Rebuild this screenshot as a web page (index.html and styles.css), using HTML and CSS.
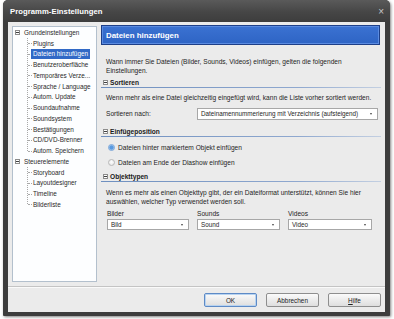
FILE: index.html
```html
<!DOCTYPE html>
<html lang="de">
<head>
<meta charset="utf-8">
<title>Programm-Einstellungen</title>
<link rel="stylesheet" href="styles.css">
</head>
<body>
<div class="window">
  <div class="titlebar">
    <span class="title">Programm-Einstellungen</span>
    <span class="close">×</span>
  </div>
  <div class="client">
    <div class="main">
      <div class="tree">
        <div class="root"><span class="tog"></span><span class="rtext">Grundeinstellungen</span></div>
        <div class="children">
          <div class="leaf"><span>Plugins</span></div>
          <div class="leaf sel"><span>Dateien hinzufügen</span></div>
          <div class="leaf"><span>Benutzeroberfläche</span></div>
          <div class="leaf"><span>Temporäres Verze...</span></div>
          <div class="leaf"><span>Sprache / Language</span></div>
          <div class="leaf"><span>Autom. Update</span></div>
          <div class="leaf"><span>Soundaufnahme</span></div>
          <div class="leaf"><span>Soundsystem</span></div>
          <div class="leaf"><span>Bestätigungen</span></div>
          <div class="leaf"><span>CD/DVD-Brenner</span></div>
          <div class="leaf"><span>Autom. Speichern</span></div>
        </div>
        <div class="root"><span class="tog"></span><span class="rtext">Steuerelemente</span></div>
        <div class="children">
          <div class="leaf"><span>Storyboard</span></div>
          <div class="leaf"><span>Layoutdesigner</span></div>
          <div class="leaf"><span>Timeline</span></div>
          <div class="leaf"><span>Bilderliste</span></div>
        </div>
      </div>
      <div class="panel">
        <div class="banner">Dateien hinzufügen</div>
        <p class="intro">Wann immer Sie Dateien (Bilder, Sounds, Videos) einfügen, gelten die folgenden Einstellungen.</p>

        <div class="sec-head"><span class="tog"></span>Sortieren</div>
        <p class="txt t1">Wenn mehr als eine Datei gleichzeitig eingefügt wird, kann die Liste vorher sortiert werden.</p>
        <div class="sort-row">
          <span class="sort-label">Sortieren nach:</span>
          <div class="combo wide"><span>Dateinamennummerierung mit Verzeichnis (aufsteigend)</span><span class="arrow"></span></div>
        </div>

        <div class="sec-head s2"><span class="tog"></span>Einfügeposition</div>
        <div class="radio r1"><span class="dot on"></span>Dateien hinter markiertem Objekt einfügen</div>
        <div class="radio r2"><span class="dot"></span>Dateien am Ende der Diashow einfügen</div>

        <div class="sec-head s3"><span class="tog"></span>Objekttypen</div>
        <p class="txt t3">Wenn es mehr als einen Objekttyp gibt, der ein Dateiformat unterstützt, können Sie hier auswählen, welcher Typ verwendet werden soll.</p>
        <div class="types">
          <div class="type"><span class="tlabel">Bilder</span><div class="combo"><span>Bild</span><span class="arrow"></span></div></div>
          <div class="type"><span class="tlabel">Sounds</span><div class="combo"><span>Sound</span><span class="arrow"></span></div></div>
          <div class="type"><span class="tlabel">Videos</span><div class="combo"><span>Video</span><span class="arrow"></span></div></div>
        </div>
      </div>
    </div>
    <div class="sep"></div>
    <div class="footer">
      <button class="btn default">OK</button>
      <button class="btn">Abbrechen</button>
      <button class="btn"><u>H</u>ilfe</button>
    </div>
  </div>
</div>
</body>
</html>
```
FILE: styles.css
```css
html, body {
  margin: 0;
  padding: 0;
}
body {
  background: #ffffff;
  font-family: "Liberation Sans", Arial, sans-serif;
  font-size: 6.6px;
  color: #1e1e1e;
  width: 394px;
  height: 319px;
  overflow: hidden;
}
.window {
  margin-left: 3px;
  width: 387px;
  height: 316px;
  box-sizing: border-box;
  background: #3d3d3d;
  padding: 0 5px 4px 5px;
  border-radius: 5px 5px 1px 1px;
  box-shadow: 1px 1px 3px rgba(0, 0, 0, 0.5);
  display: flex;
  flex-direction: column;
}
.titlebar {
  height: 22px;
  flex: none;
  display: flex;
  align-items: center;
  justify-content: space-between;
  background: linear-gradient(#5a5a5a, #464646 55%, #3d3d3d);
  margin: 0 -5px;
  padding: 1px 5px 0 7px;
  border-radius: 5px 5px 0 0;
  box-sizing: border-box;
}
.title {
  color: #ffffff;
  font-size: 7.7px;
  font-weight: bold;
  letter-spacing: 0.05px;
}
.close {
  color: #c8c8c8;
  font-size: 10px;
  line-height: 10px;
  margin-right: 1px;
}
.client {
  flex: 1;
  background: #ebebeb;
  display: flex;
  flex-direction: column;
}
.main {
  display: flex;
  padding: 3px 4px 0 4px;
  height: 260px;
  box-sizing: border-box;
}
.tree {
  margin-top: 1px;
  width: 85px;
  height: 256px;
  box-sizing: border-box;
  background: #fdfeff;
  border: 1px solid #b3c0cd;
  flex: none;
  color: #2a2a2a;
  font-size: 6.4px;
}
.root {
  display: flex;
  align-items: center;
  height: 10.75px;
  padding-left: 2px;
}
.root:first-child {
  margin-top: 0.6px;
}
.tog {
  display: inline-block;
  width: 5px;
  height: 5px;
  box-sizing: border-box;
  border: 1px solid #8c8c8c;
  background: linear-gradient(#404040, #404040) center / 3px 1px no-repeat, #ffffff;
  flex: none;
}
.rtext {
  margin-left: 4px;
}
.children {
  margin-left: 14px;
  background-image: repeating-linear-gradient(to bottom, #a8a8a8 0 1px, transparent 1px 2px);
  background-size: 1px calc(100% - 5px);
  background-repeat: no-repeat;
}
.leaf {
  display: flex;
  align-items: center;
  height: 10.75px;
}
.leaf::before {
  content: "";
  width: 4px;
  height: 0;
  border-top: 1px dotted #a8a8a8;
  margin-left: 1px;
  flex: none;
}
.leaf span {
  padding: 1px;
  line-height: 8px;
}
.leaf.sel span {
  background: #3169c6;
  color: #ffffff;
  margin-left: -1px;
  padding-left: 2px;
  padding-right: 2px;
}
.panel {
  margin-left: 4px;
  width: 280px;
  flex: none;
}
.banner {
  height: 20px;
  box-sizing: border-box;
  margin-right: 1px;
  background: linear-gradient(#3b72d2, #2e64c4);
  border: 1px solid #1d3f88;
  box-shadow: inset 0 0 0 1px #5b8be0;
  color: #ffffff;
  font-weight: bold;
  font-size: 7.9px;
  display: flex;
  align-items: center;
  padding-left: 4px;
}
p {
  margin: 0;
}
.intro {
  margin-top: 12px;
  padding-left: 5px;
  line-height: 9px;
  width: 245px;
}
.sec-head {
  margin-top: 2px;
  height: 11px;
  box-sizing: border-box;
  display: flex;
  align-items: center;
  padding-left: 2px;
  gap: 2px;
  font-weight: bold;
  font-size: 6.6px;
  color: #1a1a1a;
  border-bottom: 1px solid;
  border-image: linear-gradient(to right, #6e8fbf, #8fa8cf 70%, #c4d0e2) 1;
}
.s2 {
  margin-top: 6px;
}
.s3 {
  margin-top: 4px;
}
.txt {
  padding-left: 5px;
  line-height: 9px;
}
.t1 {
  margin-top: 5px;
}
.t3 {
  margin-top: 6px;
  width: 268px;
}
.sort-row {
  margin-top: 5px;
  height: 13px;
  display: flex;
  align-items: center;
  padding-left: 5px;
}
.sort-label {
  width: 91px;
  flex: none;
}
.combo {
  height: 12px;
  box-sizing: border-box;
  background: #ffffff;
  border: 1px solid #a7a7a7;
  display: flex;
  align-items: center;
  justify-content: space-between;
  padding: 0 5px 0 3px;
  font-size: 6.3px;
}
.combo.wide {
  width: 181px;
}
.arrow {
  width: 0;
  height: 0;
  border-left: 1.5px solid transparent;
  border-right: 1.5px solid transparent;
  border-top: 2px solid #444;
}
.radio {
  height: 10px;
  display: flex;
  align-items: center;
  padding-left: 7px;
  gap: 3px;
}
.r1 {
  margin-top: 5px;
}
.r2 {
  margin-top: 5px;
}
.dot {
  width: 7px;
  height: 7px;
  border-radius: 50%;
  box-sizing: border-box;
  border: 1px solid #b9b9b9;
  background: radial-gradient(circle at 50% 40%, #ffffff, #e0e0e0);
}
.dot.on {
  border-color: #7aa5d8;
  background: radial-gradient(circle at 50% 50%, #5a9ae0 0 1.8px, #a8cdf0 2.4px, #d8e8f8);
}
.types {
  margin-top: 3px;
  display: grid;
  grid-template-columns: 82px 83px 84px;
  column-gap: 8px;
  padding-left: 6px;
}
.type {
  display: flex;
  flex-direction: column;
}
.tlabel {
  height: 9px;
  line-height: 9px;
}
.type .combo {
  margin-top: 1px;
  height: 11px;
}
.sep {
  margin-top: 4px;
  height: 1px;
  background: #c4c4c4;
  border-bottom: 1px solid #fafafa;
}
.footer {
  display: flex;
  justify-content: flex-end;
  gap: 9px;
  padding: 5px 4px 5px 0;
}
.btn {
  width: 53px;
  height: 14px;
  box-sizing: border-box;
  font-family: "Liberation Sans", Arial, sans-serif;
  font-size: 6.4px;
  color: #222;
  background: linear-gradient(#fbfbfb, #ececec 50%, #dedede);
  border: 1px solid #8e8e8e;
  border-radius: 2px;
  padding: 0;
  margin: 0;
}
.btn.default {
  border-color: #5d8ac6;
  box-shadow: inset 0 0 0 1px #b8d3f0;
}
```
